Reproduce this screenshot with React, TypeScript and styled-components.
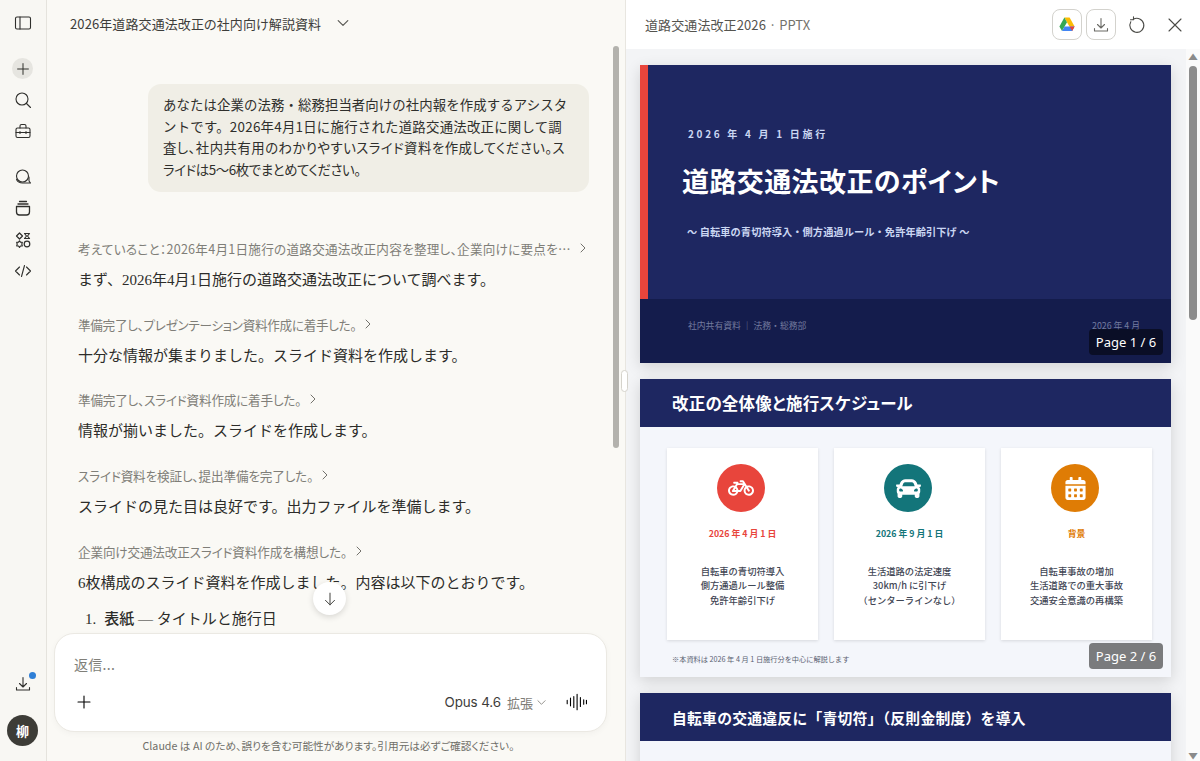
import React from "react";
import styled, { createGlobalStyle } from "styled-components";
import { FaBicycle, FaCar, FaCalendarAlt } from "react-icons/fa";

const UI = `"Noto Sans CJK JP", "Noto Sans", sans-serif`;
const BODY = `"Liberation Serif", "Noto Sans CJK JP", serif`;

const Global = createGlobalStyle`
  html, body { margin: 0; padding: 0; height: 100%; overflow: hidden; background: #faf9f5; }
  * { box-sizing: border-box; }
  body { font-family: ${UI}; }
`;

const Shell = styled.div`display: flex; width: 1200px; height: 761px; overflow: hidden;`;

/* Rail */
const Rail = styled.nav`
  width: 47px; flex: none; display: flex; flex-direction: column; align-items: center;
  background: #f8f7f3; border-right: 1px solid #e5e3dd; padding-top: 12px; padding-right: 1px;
`;
const RailBtn = styled.div<{ $active?: boolean; $gap?: number }>`
  position: relative; width: 21px; height: 21px; border-radius: 50%; display: flex; align-items: center; justify-content: center;
  margin-top: ${p => p.$gap ?? 0}px; color: #2f2f2c;
  background: ${p => (p.$active ? "#e6e5e0" : "transparent")};
`;
const RailGrow = styled.div`flex: 1;`;
const Dot = styled.span`position: absolute; top: -1px; right: -3px; width: 7px; height: 7px; border-radius: 50%; background: #2f7fd6;`;
const Avatar = styled.div`
  width: 31px; height: 31px; border-radius: 50%; background: #3d3c37; color: #fff; font-size: 13px; font-weight: 700;
  display: flex; align-items: center; justify-content: center; margin: 21px 0 15px;
`;

/* Chat */
const Chat = styled.main`position: relative; width: 578px; flex: none; display: flex; flex-direction: column; background: #faf9f5;`;
const ChatHeader = styled.header`
  height: 46px; flex: none; display: flex; align-items: center; gap: 16px; padding-left: 23px;
  font-size: 13px; color: #3d3d3a; font-feature-settings: "palt"; letter-spacing: .1px;
`;
const Messages = styled.div`flex: 1; min-height: 0; overflow: hidden; padding: 38px 0 0 31px;`;
const Bubble = styled.div`
  margin-left: 70px; width: 441px; height: 108px; padding: 10px 15px; background: #f0eee6; border-radius: 13px;
  font-size: 13.4px; line-height: 21.7px; color: #2f2f2c; white-space: nowrap;
`;
const BubbleLine = styled.div<{ $ls: number; $palt?: boolean }>`
  letter-spacing: ${p => p.$ls}px;
  font-feature-settings: ${p => (p.$palt ? `"palt"` : "normal")};
`;
const Thinking = styled.div<{ $top: number; $ls: number }>`
  display: flex; align-items: center; gap: 7px; margin-top: ${p => p.$top}px; height: 20px;
  font-size: 12.6px; color: #7f7e78; font-feature-settings: "palt"; white-space: nowrap; letter-spacing: ${p => p.$ls}px;
`;
const Para = styled.p`
  margin: 11px 0 0; height: 22px; line-height: 22px; font-family: ${BODY}; font-size: 15px; color: #2c2c29; white-space: nowrap;
`;
const ListItem = styled.div`
  display: flex; gap: 8px; margin: 14px 0 0 7px; height: 22px; line-height: 22px;
  font-family: ${BODY}; font-size: 15px; color: #2c2c29; white-space: nowrap;
`;
const Lead = styled.span`font-weight: 500;`;
const ScrollThumb = styled.div`position: absolute; left: 566px; top: 46px; width: 6px; height: 402px; border-radius: 3px; background: #b3b2ad;`;
const ScrollDown = styled.div`
  position: absolute; left: 266px; top: 582px; width: 33px; height: 33px; border-radius: 50%; background: #fff;
  display: flex; align-items: center; justify-content: center; box-shadow: 0 2px 6px rgba(0,0,0,.14); color: #3d3d3a;
`;
const Composer = styled.section`
  flex: none; margin: 0 18px 0 7px; height: 99px; background: #fff; border: 1px solid #ebe9e3; border-radius: 20px;
  box-shadow: 0 2px 6px rgba(0,0,0,.035); padding: 19px 19px 0 19px; display: flex; flex-direction: column;
`;
const Placeholder = styled.div`font-size: 14px; line-height: 22px; color: #807f79; letter-spacing: .3px;`;
const ComposerRow = styled.div`display: flex; align-items: center; margin-top: 15px; height: 24px;`;
const ModelName = styled.span`margin-left: auto; font-size: 13.4px; color: #3d3d3a; font-family: "Inter", sans-serif; letter-spacing: -.1px;`;
const ModelMode = styled.span`margin: 0 4px 0 6px; font-size: 13px; color: #7f7e78;`;
const Voice = styled.span`margin-left: 19px; display: flex;`;
const Disclaimer = styled.footer`
  flex: none; height: 29px; line-height: 28px; padding-right: 15px; text-align: center; font-size: 10.7px; color: #6f6e68; font-feature-settings: "palt";
`;
const Handle = styled.div`position: absolute; left: 621px; top: 370px; width: 7px; height: 22px; background: #fff; border: 1px solid #d5d3cc; border-radius: 4px; z-index: 3;`;

/* Panel */
const Panel = styled.aside`flex: 1; min-width: 0; display: flex; flex-direction: column; background: #fff; border-left: 1px solid #e8e6e0;`;
const PanelHeader = styled.header`height: 49px; flex: none; display: flex; align-items: center; padding: 0 15px 0 19px;`;
const PanelTitle = styled.div`flex: 1; font-size: 13px; color: #55544f; font-feature-settings: "palt"; letter-spacing: .1px;`;
const Muted = styled.span`color: #73726c; letter-spacing: 0;`;
const OutlineBtn = styled.div`
  width: 30px; height: 31px; border: 1px solid #d3d2cd; border-radius: 8px; display: flex; align-items: center; justify-content: center; margin-left: 4px; color: #6a6a65;
`;
const PlainBtn = styled.div<{ $gap: number }>`display: flex; color: #4a4a46; margin-left: ${p => p.$gap}px;`;
const PanelBody = styled.div`flex: 1; min-height: 0; display: flex; background: #f3f4f6;`;
const Slides = styled.div`flex: 1; min-width: 0; overflow: hidden; padding: 16px 16px 0 14px; display: flex; flex-direction: column; gap: 16px;`;
const Track = styled.div`width: 14px; flex: none; background: #fafafa; display: flex; flex-direction: column; align-items: center; color: #8a8a8a; position: relative;`;
const TrackArrow = styled.div`font-size: 8px; line-height: 10px; height: 10px; margin-top: 3px; transform: scaleX(1.2);`;
const TrackThumb = styled.div`width: 8px; height: 254px; margin-top: 4px; border-radius: 4px; background: #8c8c8c;`;
const TrackGrow = styled.div`flex: 1;`;

const Slide = styled.article<{ $light?: boolean }>`
  position: relative; flex: none; width: 531px; height: 298px; display: flex; flex-direction: column;
  background: ${p => (p.$light ? "#f4f6fb" : "#1e2761")}; box-shadow: 0 4px 14px rgba(0,0,0,.14);
`;
const PageTag = styled.div`
  position: absolute; right: 8px; bottom: 8px; width: 74px; height: 26px; border-radius: 4px; background: rgba(0,0,0,.5);
  color: #fff; font-size: 13px; line-height: 26px; text-align: center; font-family: "Noto Sans", sans-serif;
`;
const Cover = styled.div`flex: 1; border-left: 8px solid #e8453c; padding: 57px 0 0 34px;`;
const CoverDate = styled.div`font-size: 10px; line-height: 24px; height: 24px; letter-spacing: 2.7px; font-weight: 700; color: #cad6f2; padding-left: 6px;`;
const CoverTitle = styled.h1`margin: 15px 0 0; font-size: 27px; line-height: 40px; font-weight: 700; color: #fff; font-feature-settings: "palt"; letter-spacing: .4px; white-space: nowrap;`;
const CoverSub = styled.div`margin: 21px 0 0 5px; font-size: 10.2px; line-height: 20px; font-weight: 700; color: #cad6f2; letter-spacing: .1px; white-space: nowrap;`;
const CoverFoot = styled.div`
  height: 64px; flex: none; background: #141c4c; display: flex; justify-content: space-between; padding: 17px 31px 0 48px;
  font-size: 8.8px; line-height: 20px; color: #737b9f;
`;
const SlideHead = styled.h2<{ $size?: number; $ls?: number; $plain?: boolean }>`
  margin: 0; flex: none; height: 48px; padding-left: 32px; background: #1e2761; display: flex; align-items: center;
  color: #fff; font-size: ${p => p.$size ?? 16.5}px; font-weight: 700; letter-spacing: ${p => p.$ls ?? 0.2}px; white-space: nowrap;
  font-feature-settings: ${p => (p.$plain ? "normal" : `"palt"`)};
`;
const CardRow = styled.div`display: flex; gap: 16px; padding: 21px 0 0 27px; flex: none;`;
const Card = styled.div<{ $w?: number }>`
  width: ${p => p.$w ?? 151}px; height: 192px; flex: none; background: #fff; box-shadow: 0 1px 3px rgba(0,0,0,.12);
  display: flex; flex-direction: column; align-items: center; padding-top: 16px;
`;
const Round = styled.div<{ $c: string }>`width: 48px; height: 48px; margin-right: 3px; border-radius: 50%; background: ${p => p.$c}; display: flex; align-items: center; justify-content: center; color: #fff;`;
const CardDate = styled.div<{ $c: string }>`margin-top: 14px; font-size: 8.8px; line-height: 16px; font-weight: 700; color: ${p => p.$c};`;
const CardText = styled.div`margin-top: 21.500px; font-size: 9.3px; line-height: 14.7px; font-weight: 500; text-align: center; color: #3f4654; white-space: nowrap;`;
const Note = styled.div`margin: 12px 0 0 32px; font-size: 7.2px; line-height: 14px; color: #5a6172;`;

const s = { fill: "none", stroke: "currentColor", strokeLinecap: "round" as const, strokeLinejoin: "round" as const };
const Ico = ({ children, size = 20, sw }: { children: React.ReactNode; size?: number; sw?: number }) => (
  <svg width={size} height={size} viewBox="0 0 20 20" {...s} strokeWidth={sw ?? 1.1}>{children}</svg>
);
const Chevron = ({ dir, size = 10, color = "#73726c" }: { dir: "r" | "d"; size?: number; color?: string }) => (
  <svg width={size} height={size} viewBox="0 0 10 10" fill="none" stroke={color} strokeWidth="1" strokeLinecap="round" strokeLinejoin="round" style={{ flex: "none" }}>
    {dir === "r" ? <path d="M3 1l4 4-4 4" /> : <path d="M1 3l4 4 4-4" />}
  </svg>
);
const Download = () => (
  <Ico size={20}>
    <path d="M10 3.500v9M6.500 9.500l3.500 3.500 3.500-3.500M3.500 13.500v2.500h13v-2.500" />
  </Ico>
);
const Drive = () => (
  <svg width="16" height="15" viewBox="0 0 16 15">
    <path d="M5.400 0.500h5.200L15.600 9.500h-5.200z" fill="#fbbc04" />
    <path d="M5.400 0.500L0.400 9.500l2.600 4.600L8 5.200z" fill="#34a853" />
    <path d="M3 14.100h10.200l2.400-4.600H5.600z" fill="#4285f4" />
    <path d="M13.200 14.100l2.400-4.600h-5z" fill="#ea4335" />
  </svg>
);

const thoughts: [string, string, number, number][] = [
  ["考えていること：2026年4月1日施行の道路交通法改正内容を整理し、企業向けに要点を…", "まず、2026年4月1日施行の道路交通法改正について調べます。", 46, 0.25],
  ["準備完了し、プレゼンテーション資料作成に着手した。", "十分な情報が集まりました。スライド資料を作成します。", 23, -0.3],
  ["準備完了し、スライド資料作成に着手した。", "情報が揃いました。スライドを作成します。", 22, -0.2],
  ["スライド資料を検証し、提出準備を完了した。", "スライドの見た目は良好です。出力ファイルを準備します。", 23, -0.15],
  ["企業向け交通法改正スライド資料作成を構想した。", "6枚構成のスライド資料を作成しました。内容は以下のとおりです。", 23, -0.15],
];

const cards = [
  { c: "#e8453c", icon: <FaBicycle size={26} />, date: "2026 年 4 月 1 日", lines: ["自転車の青切符導入", "側方通過ルール整備", "免許年齢引下げ"] },
  { c: "#13757a", icon: <FaCar size={25} />, date: "2026 年 9 月 1 日", lines: ["生活道路の法定速度", "30km/h に引下げ", "（センターラインなし）"] },
  { c: "#df7c05", icon: <FaCalendarAlt size={23} />, date: "背景", lines: ["自転車事故の増加", "生活道路での重大事故", "交通安全意識の再構築"] },
];

export default function App() {
  return (
    <Shell>
      <Global />
      <Rail>
        <RailBtn>
          <Ico><rect x="2.500" y="4" width="15" height="12" rx="1.500" /><path d="M7 4v12" /></Ico>
        </RailBtn>
        <RailBtn $active $gap={25}><Ico size={18}><path d="M10 4v12M4 10h12" /></Ico></RailBtn>
        <RailBtn $gap={10}><Ico><circle cx="9" cy="9" r="6" /><path d="M13.500 13.500l4 4" /></Ico></RailBtn>
        <RailBtn $gap={10}>
          <Ico><rect x="3" y="7" width="14" height="9.500" rx="1.500" /><path d="M7 7V5a1.500 1.500 0 0 1 1.500-1.500h3A1.500 1.500 0 0 1 13 5v2M3 11.500h14M7 10.500v2M13 10.500v2" /></Ico>
        </RailBtn>
        <RailBtn $gap={25}>
          <Ico><circle cx="9.500" cy="9" r="6" /><path d="M3.500 12.500c1 2 3 3.500 6 3.500h8l-1.500-2v-4" /></Ico>
        </RailBtn>
        <RailBtn $gap={10}>
          <Ico sw={1.3}><path d="M3.500 8.500h13v5.500a3 3 0 0 1-3 3h-7a3 3 0 0 1-3-3zM5 6h10M6.500 3.500h7" /></Ico>
        </RailBtn>
        <RailBtn $gap={11}>
          <Ico sw={1.200}><path d="M6.500 3l3 3-3 3-3-3zM11.500 3.500h5l-2 2.500 2 2.500h-5l2-2.500z" /><circle cx="14" cy="14" r="2.800" /><path d="M6.500 10.800l1 1.400 1.800.2-.5 1.700.5 1.700-1.800.2-1 1.400-1-1.400-1.800-.2.500-1.700-.5-1.700 1.800-.2z" /></Ico>
        </RailBtn>
        <RailBtn $gap={10}><Ico><path d="M6.500 6l-4 4 4 4M13.500 6l4 4-4 4M11.500 4.500l-3 11" /></Ico></RailBtn>
        <RailGrow />
        <RailBtn><Download /><Dot /></RailBtn>
        <Avatar>柳</Avatar>
      </Rail>

      <Chat>
        <ChatHeader>
          2026年道路交通法改正の社内向け解説資料
          <Chevron dir="d" size={12} color="#5a5a55" />
        </ChatHeader>
        <Messages>
          <Bubble>
            <BubbleLine $ls={0.1}>あなたは企業の法務・総務担当者向けの社内報を作成するアシスタ</BubbleLine>
            <BubbleLine $ls={0.25}>ントです。2026年4月1日に施行された道路交通法改正に関して調</BubbleLine>
            <BubbleLine $ls={0.47} $palt>査し、社内共有用のわかりやすいスライド資料を作成してください。ス</BubbleLine>
            <BubbleLine $ls={-0.4} $palt>ライドは5〜6枚でまとめてください。</BubbleLine>
          </Bubble>
          {thoughts.map(([t, p, top, ls]) => (
            <React.Fragment key={t}>
              <Thinking $top={top} $ls={ls}>{t}<Chevron dir="r" /></Thinking>
              <Para>{p}</Para>
            </React.Fragment>
          ))}
          <ListItem><span>1.</span><span><Lead>表紙</Lead> — タイトルと施行日</span></ListItem>
        </Messages>
        <Composer>
          <Placeholder>返信...</Placeholder>
          <ComposerRow>
            <Ico><path d="M10 4v12M4 10h12" /></Ico>
            <ModelName>Opus 4.6</ModelName>
            <ModelMode>拡張</ModelMode>
            <Chevron dir="d" size={9} color="#8a8983" />
            <Voice>
              <Ico size={22} sw={1}><path d="M2 8.500v3M5 6.500v7M8 5v10M11 3v14M14 6v8M17 8v4M19.500 8.500v3" /></Ico>
            </Voice>
          </ComposerRow>
        </Composer>
        <Disclaimer>Claude は AI のため、誤りを含む可能性があります。引用元は必ずご確認ください。</Disclaimer>
        <ScrollThumb />
        <ScrollDown><Ico size={18}><path d="M10 3.500v13M5 11.500l5 5 5-5" /></Ico></ScrollDown>
      </Chat>
      <Handle />

      <Panel>
        <PanelHeader>
          <PanelTitle>道路交通法改正2026 <Muted>· PPTX</Muted></PanelTitle>
          <OutlineBtn><Drive /></OutlineBtn>
          <OutlineBtn><Download /></OutlineBtn>
          <PlainBtn $gap={11}><Ico><path d="M6.300 4.300A7 7 0 1 1 3.800 6.800M6.500 1.800v3h-3" /></Ico></PlainBtn>
          <PlainBtn $gap={18}><Ico><path d="M4 4l12 12M16 4L4 16" /></Ico></PlainBtn>
        </PanelHeader>
        <PanelBody>
          <Slides>
            <Slide>
              <Cover>
                <CoverDate>2026 年 4 月 1 日施行</CoverDate>
                <CoverTitle>道路交通法改正のポイント</CoverTitle>
                <CoverSub>〜 自転車の青切符導入・側方通過ルール・免許年齢引下げ 〜</CoverSub>
              </Cover>
              <CoverFoot><span>社内共有資料 ｜ 法務・総務部</span><span>2026 年 4 月</span></CoverFoot>
              <PageTag>Page 1 / 6</PageTag>
            </Slide>
            <Slide $light>
              <SlideHead>改正の全体像と施行スケジュール</SlideHead>
              <CardRow>
                {cards.map(card => (
                  <Card key={card.date}>
                    <Round $c={card.c}>{card.icon}</Round>
                    <CardDate $c={card.c}>{card.date}</CardDate>
                    <CardText>{card.lines.map(l => <div key={l}>{l}</div>)}</CardText>
                  </Card>
                ))}
              </CardRow>
              <Note>※本資料は 2026 年 4 月 1 日施行分を中心に解説します</Note>
              <PageTag>Page 2 / 6</PageTag>
            </Slide>
            <Slide $light>
              <SlideHead $size={14.8} $ls={0.25} $plain>自転車の交通違反に「青切符」（反則金制度）を導入</SlideHead>
              <CardRow>
                <Card $w={239} />
                <Card $w={229} />
              </CardRow>
            </Slide>
          </Slides>
          <Track>
            <TrackArrow>▲</TrackArrow>
            <TrackThumb />
            <TrackGrow />
            <TrackArrow>▼</TrackArrow>
          </Track>
        </PanelBody>
      </Panel>
    </Shell>
  );
}
